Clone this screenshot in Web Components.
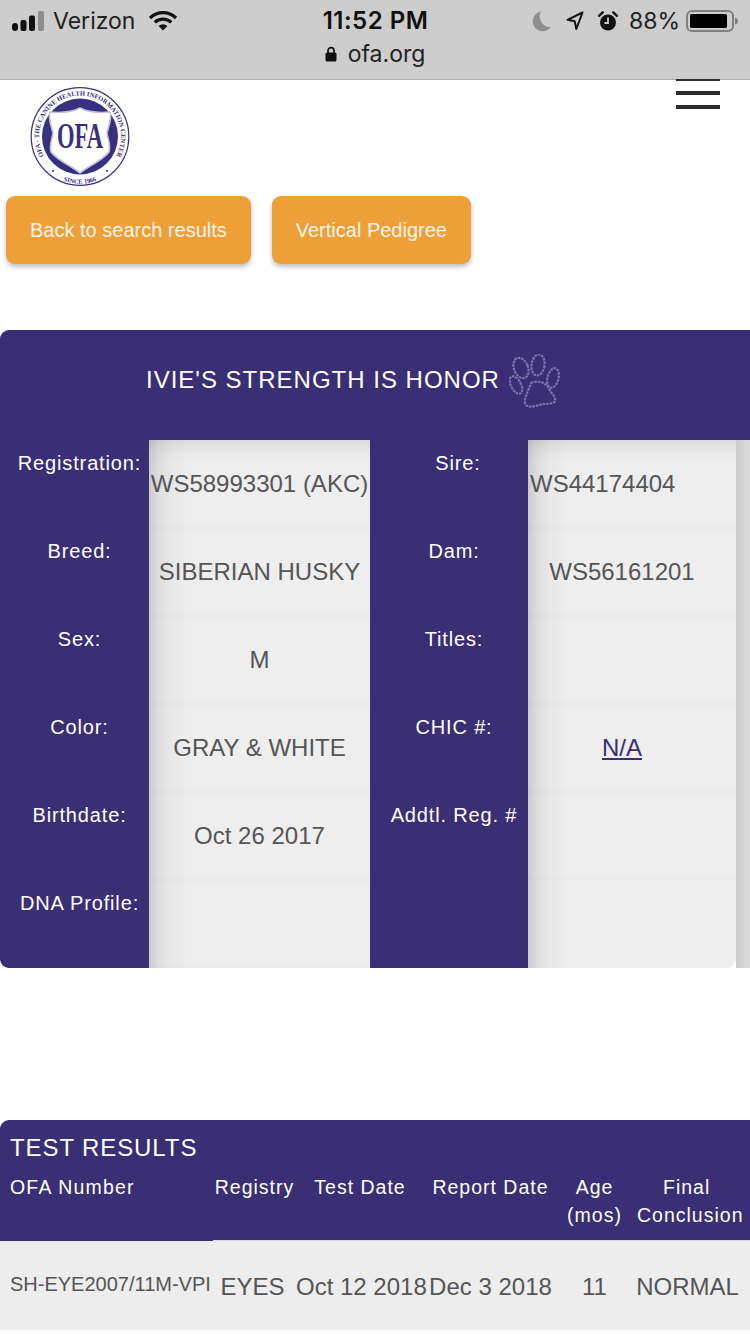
<!DOCTYPE html>
<html lang="en">
<head>
<meta charset="utf-8">
<title>OFA</title>
<style>
html, body { margin: 0; padding: 0; background: #fff; }
body { width: 750px; height: 1334px; overflow: hidden; font-family: "Liberation Sans", sans-serif; }
</style>
</head>
<body>
<ios-bar></ios-bar>
<site-header></site-header>
<action-buttons>
  <action-button>Back to search results</action-button>
  <action-button>Vertical Pedigree</action-button>
</action-buttons>
<dog-card name="IVIE'S STRENGTH IS HONOR"></dog-card>
<test-results></test-results>

<script>
class IosBar extends HTMLElement {
  constructor() {
    super();
    const shadow = this.attachShadow({ mode: "open" });
    shadow.innerHTML = `
<style>
:host {
  display: block;
  height: 80px;
  box-sizing: border-box;
  background: #cdcdcd;
  border-bottom: 1px solid #a8a8a8;
  font-family: Inter, "Noto Sans", sans-serif;
  color: #111;
}
.top {
  display: grid;
  grid-template-columns: 1fr auto 1fr;
  align-items: center;
  height: 41px;
  padding: 0 11px 0 12px;
}
.left, .right { display: flex; align-items: center; }
.right { justify-content: flex-end; }
.carrier { font-size: 23px; margin-left: 7px; margin-right: 13px; color: #222; }
.time { font-size: 24px; font-weight: 600; letter-spacing: .5px; }
.pct { font-size: 23px; margin: 0 6px 0 11px; color: #222; }
.url { display: flex; justify-content: center; align-items: center; gap: 11px; font-size: 23px; color: #222; line-height: 26px; }
svg { display: block; }
</style>
<div class="top">
  <div class="left">
    <svg width="34" height="20" viewBox="0 0 34 20"><rect x="0" y="12" width="6" height="8" rx="3" fill="#111"/><rect x="8.5" y="9" width="6" height="11" rx="2" fill="#111"/><rect x="17" y="4.5" width="6" height="15.5" rx="2" fill="#111"/><rect x="26" y="0" width="6" height="20" rx="2" fill="#8e8e8e"/></svg>
    <span class="carrier">Verizon</span>
    <svg width="30" height="22" viewBox="0 0 30 22"><path d="M2 8 A18.5 18.5 0 0 1 28 8" fill="none" stroke="#111" stroke-width="3.2"/><path d="M6.8 12.4 A11.8 11.8 0 0 1 23.2 12.4" fill="none" stroke="#111" stroke-width="3.2"/><path d="M10.6 16 L15 20.5 L19.4 16 A6.3 6.3 0 0 0 10.6 16 Z" fill="#111"/></svg>
  </div>
  <div class="time">11:52 PM</div>
  <div class="right">
    <svg width="20" height="22" viewBox="0 0 20 22"><path d="M9 1.5 A10 10 0 1 0 19 17 A10.5 10.5 0 0 1 9 1.5 Z" fill="#8f8f8f"/></svg>
    <svg style="margin-left:14px" width="18" height="20" viewBox="0 0 18 20"><path d="M16.5 1.5 L1.5 8.8 L8.7 10.2 L10.3 18 Z" fill="none" stroke="#111" stroke-width="2" stroke-linejoin="round"/></svg>
    <svg style="margin-left:14px" width="20" height="20" viewBox="0 0 20 20"><circle cx="10" cy="11.5" r="8" fill="#111"/><path d="M10 6.5 V12 H6.5" fill="none" stroke="#cdcdcd" stroke-width="1.8"/><path d="M1 4.8 L4.8 1.4 M19 4.8 L15.2 1.4" stroke="#111" stroke-width="2.4" stroke-linecap="round"/></svg>
    <span class="pct">88%</span>
    <svg width="53" height="24" viewBox="0 0 53 24"><rect x="1" y="2" width="46" height="20" rx="5" fill="none" stroke="#7f7f7f" stroke-width="2"/><rect x="4" y="5" width="37" height="14" rx="1.5" fill="#000"/><path d="M49 8.5 C51 9 52 10.5 52 12 C52 13.5 51 15 49 15.5 Z" fill="#7f7f7f"/></svg>
  </div>
</div>
<div class="url">
  <svg width="12" height="16" viewBox="0 0 12 16"><path d="M3 7 V4.6 A3 3 0 0 1 9 4.6 V7" fill="none" stroke="#111" stroke-width="1.7"/><rect x="0.5" y="6.5" width="11" height="9" rx="1.6" fill="#111"/></svg>
  <span>ofa.org</span>
</div>`;
  }
}
customElements.define("ios-bar", IosBar);

class SiteHeader extends HTMLElement {
  constructor() {
    super();
    const shadow = this.attachShadow({ mode: "open" });
    shadow.innerHTML = `
<style>
:host {
  display: flex;
  justify-content: space-between;
  height: 116px;
  padding: 7px 30px 0 30px;
  box-sizing: border-box;
}
/* the burger runs up onto the browser bar's bottom line */
.burger { display: flex; flex-direction: column; gap: 10px; width: 44px; margin-top: -8px; position: relative; }
.burger i { display: block; height: 4px; background: #2b2b2b; }
.burger i:first-child { height: 2px; }
svg { display: block; }
</style>
<svg width="100" height="100" viewBox="0 0 100 100">
  <defs>
    <path id="arc" d="M26.5 83.1 A41 41 0 1 1 73.5 83.1"/>
    <path id="arcb" d="M22 87.5 A47 47 0 0 0 78 87.5"/>
  </defs>
  <circle cx="50" cy="49.5" r="48.8" fill="#fff" stroke="#38307f" stroke-width="1.2"/>
  <circle cx="50" cy="49.5" r="38" fill="#38307f"/>
  <text font-family="'Liberation Serif', serif" font-size="6.6" font-weight="700" fill="#38307f" text-anchor="middle"><textPath href="#arc" startOffset="50%">OFA - THE CANINE HEALTH INFORMATION CENTER</textPath></text>
  <text font-family="'Liberation Serif', serif" font-size="6.4" font-weight="700" fill="#38307f" text-anchor="middle"><textPath href="#arcb" startOffset="50%">SINCE 1966</textPath></text>
  <circle cx="23" cy="84" r="1" fill="#38307f"/>
  <circle cx="77" cy="84" r="1" fill="#38307f"/>
  <path d="M20 25 C30 26 42 25 50 21 C58 25 70 26 80 25 C82 31 79 38 77 46 C78 53 81 58 79 65 C72 74 60 78 50 86 C40 78 28 74 21 65 C19 58 22 53 23 46 C21 38 18 31 20 25 Z" fill="#fff" stroke="#c3c0dc" stroke-width="1.6"/>
  <text x="50" y="61" text-anchor="middle" font-family="'Liberation Serif', serif" font-size="36" font-weight="700" fill="#38307f" textLength="46" lengthAdjust="spacingAndGlyphs">OFA</text>
</svg>
<div class="burger"><i></i><i></i><i></i></div>`;
  }
}
customElements.define("site-header", SiteHeader);

class ActionButtons extends HTMLElement {
  constructor() {
    super();
    const shadow = this.attachShadow({ mode: "open" });
    shadow.innerHTML = `
<style>
:host { display: flex; gap: 21px; padding-left: 6px; height: 134px; align-items: flex-start; }
</style>
<slot></slot>`;
  }
}
customElements.define("action-buttons", ActionButtons);

class ActionButton extends HTMLElement {
  constructor() {
    super();
    const shadow = this.attachShadow({ mode: "open" });
    shadow.innerHTML = `
<style>
:host {
  display: flex;
  align-items: center;
  height: 68px;
  padding: 0 24px;
  box-sizing: border-box;
  background: #ef9f38;
  border-radius: 9px;
  color: rgba(255,255,255,.92);
  font-family: "Liberation Sans", sans-serif;
  font-size: 20px;
  box-shadow: 0 3px 5px rgba(0,0,0,.25);
}
</style>
<slot></slot>`;
  }
}
customElements.define("action-button", ActionButton);

class InfoRow extends HTMLElement {
  constructor() {
    super();
    const shadow = this.attachShadow({ mode: "open" });
    shadow.innerHTML = `
<style>
:host { display: contents; }
.label {
  background: #3a2e75;
  color: #fff;
  font-size: 20px;
  letter-spacing: .85px;
  text-align: center;
  padding: 12px 0 0 10px;
  line-height: 22px;
  box-sizing: border-box;
  white-space: nowrap;
  height: 88px;
}
.value {
  background: linear-gradient(90deg, #cbcbcb, #dedede 10px, #e9e9e9 24px, #eeeeee 40px);
  color: #555;
  font-size: 24px;
  height: 88px;
  box-sizing: border-box;
  display: flex;
  align-items: center;
  justify-content: center;
  white-space: nowrap;
  box-shadow: inset 0 8px 12px -10px rgba(0,0,0,.035), inset 0 -8px 12px -10px rgba(0,0,0,.035);
}
.first { box-shadow: inset 0 20px 18px -14px rgba(0,0,0,.1), inset 0 -8px 12px -10px rgba(0,0,0,.035); }
.last { box-shadow: none; border-bottom-right-radius: 9px; }
a { color: #3a2e75; }
</style>
<div class="label"></div>
<div class="value"></div>`;
  }

  connectedCallback() {
    const label = this.shadowRoot.querySelector(".label");
    label.textContent = this.getAttribute("label");
    const value = this.shadowRoot.querySelector(".value");
    const text = this.getAttribute("value") || "";
    if (this.hasAttribute("link")) {
      const a = document.createElement("a");
      a.href = "#";
      a.textContent = text;
      value.appendChild(a);
    } else {
      value.textContent = text;
    }
    if (this.hasAttribute("first")) value.classList.add("first");
    if (this.hasAttribute("last")) value.classList.add("last");
    if (this.hasAttribute("right")) value.style.paddingRight = "20px";
    if (this.hasAttribute("start")) {
      value.style.justifyContent = "flex-start";
      value.style.padding = "0 0 0 2px";
    }
    if (this.hasAttribute("label-pad")) label.style.paddingLeft = this.getAttribute("label-pad") + "px";
  }
}
customElements.define("info-row", InfoRow);

class DogCard extends HTMLElement {
  constructor() {
    super();
    const shadow = this.attachShadow({ mode: "open" });
    shadow.innerHTML = `
<style>
:host { display: block; height: 790px; font-family: "Liberation Sans", sans-serif; }
.card { border-radius: 9px 0 0 9px; overflow: hidden; height: 638px; }
.head {
  height: 110px;
  background: #3a2e75;
  display: flex;
  align-items: center;
  padding: 0 0 10px 146px;
  gap: 9px;
  color: #fff;
  font-size: 24px;
  letter-spacing: 1px;
  box-sizing: border-box;
}
.head svg { margin-top: 3px; }
.grid { display: grid; grid-template-columns: 149px 221px 158px 208px 14px; grid-auto-rows: 88px; background: #fff; }
.edge { grid-column: 5; grid-row: 1 / span 6; background: linear-gradient(90deg, #cdcdcd, #dcdcdc); }
</style>
<div class="card">
  <div class="head"><span class="name"></span>
    <svg width="52" height="56" viewBox="0 0 52 56" fill="none" stroke="#7d74ad" stroke-width="2.2" stroke-dasharray="2.6 .9">
      <ellipse cx="12" cy="14" rx="7" ry="10.5" transform="rotate(-22 12 14)"/>
      <ellipse cx="29" cy="11" rx="6.5" ry="10.5" transform="rotate(8 29 11)"/>
      <ellipse cx="44" cy="24" rx="5.5" ry="10" transform="rotate(14 44 24)"/>
      <ellipse cx="7" cy="31" rx="5" ry="9.5" transform="rotate(-28 7 31)"/>
      <path d="M22 29 C28 26 36 28 39 33 C41 38 47 42 46 47 C44 51 36 49 30 51 C24 53 17 54 16 49 C15 44 19 38 22 29 Z"/>
    </svg>
  </div>
  <div class="grid" id="grid"></div>
</div>`;
  }

  connectedCallback() {
    this.shadowRoot.querySelector(".name").textContent = this.getAttribute("name");
    const grid = this.shadowRoot.querySelector("#grid");
    const rows = [
      ["Registration:", "WS58993301 (AKC)", "Sire:", "WS44174404"],
      ["Breed:", "SIBERIAN HUSKY", "Dam:", "WS56161201"],
      ["Sex:", "M", "Titles:", ""],
      ["Color:", "GRAY & WHITE", "CHIC #:", "N/A"],
      ["Birthdate:", "Oct 26 2017", "Addtl. Reg. #", ""],
      ["DNA Profile:", "", "", ""],
    ];
    rows.forEach((row, i) => {
      const left = document.createElement("info-row");
      left.setAttribute("label", row[0]);
      left.setAttribute("value", row[1]);
      const right = document.createElement("info-row");
      right.setAttribute("label", row[2]);
      right.setAttribute("value", row[3]);
      right.setAttribute("right", "");
      if (i === 0) {
        left.setAttribute("first", "");
        right.setAttribute("first", "");
        right.setAttribute("start", "");
        right.setAttribute("label-pad", "18");
      }
      if (i === 3) right.setAttribute("link", "");
      if (i === 5) right.setAttribute("last", "");
      grid.append(left, right);
    });
    const edge = document.createElement("div");
    edge.className = "edge";
    grid.append(edge);
  }
}
customElements.define("dog-card", DogCard);

class TestResults extends HTMLElement {
  constructor() {
    super();
    const shadow = this.attachShadow({ mode: "open" });
    shadow.innerHTML = `
<style>
:host { display: block; font-family: "Liberation Sans", sans-serif; }
.panel { background: #3a2e75; border-radius: 9px 0 0 0; color: #fff; height: 120px; box-sizing: border-box; padding-top: 14px; }
h3 { margin: 0 0 0 10px; font-size: 24px; font-weight: 400; letter-spacing: .9px; line-height: 28px; }
.grid { display: grid; grid-template-columns: 213px 83px 128px 133px 75px 1fr; }
.th { font-size: 19.5px; letter-spacing: 1px; line-height: 28px; text-align: center; white-space: nowrap; margin-top: 11px; }
.th:first-child { text-align: left; padding-left: 10px; letter-spacing: 1.2px; }
.th:last-child { text-align: left; padding-left: 5px; }
.th:last-child span { margin-left: 26px; }
.td:nth-child(2) { padding-right: 4px; }
.td:last-child { padding-right: 7px; }
.rule { height: 1px; background: linear-gradient(90deg, #3a2e75 213px, #d9d9de 213px); }
.row { background: #ededed; height: 89px; box-sizing: border-box; padding-top: 2px; color: #555; font-size: 24px; align-items: center; }
.td { text-align: center; white-space: nowrap; }
.td.num { font-size: 20px; text-align: left; padding-left: 10px; margin-top: -4px; }
</style>
<div class="panel">
  <h3>TEST RESULTS</h3>
  <div class="grid">
    <div class="th">OFA Number</div>
    <div class="th">Registry</div>
    <div class="th">Test Date</div>
    <div class="th">Report Date</div>
    <div class="th">Age<br>(mos)</div>
    <div class="th"><span>Final</span><br>Conclusion</div>
  </div>
</div>
<div class="rule"></div>
<div class="grid row">
  <div class="td num">SH-EYE2007/11M-VPI</div>
  <div class="td">EYES</div>
  <div class="td">Oct 12 2018</div>
  <div class="td">Dec 3 2018</div>
  <div class="td">11</div>
  <div class="td">NORMAL</div>
</div>`;
  }
}
customElements.define("test-results", TestResults);
</script>
</body>
</html>
